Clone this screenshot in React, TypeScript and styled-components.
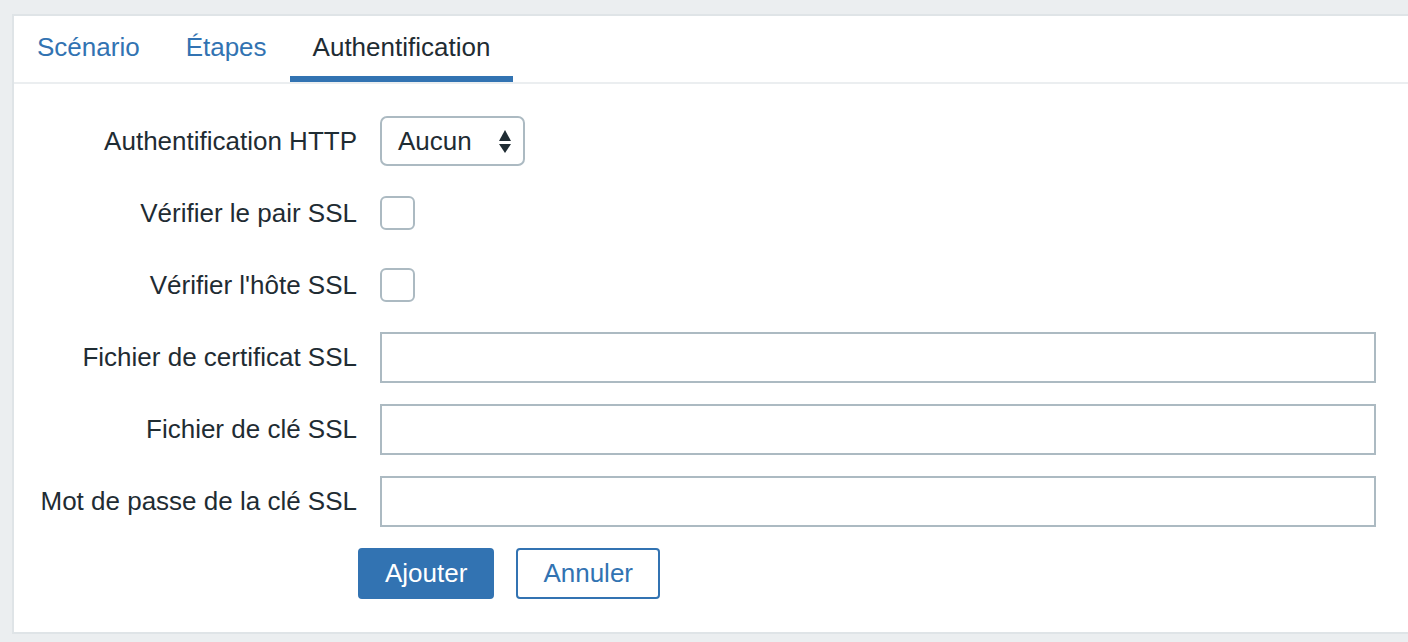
import React, { FC, useState } from 'react';
import styled, { createGlobalStyle } from 'styled-components';

const BLUE = '#3273b2';
const TEXT = '#1f2c33';
const FIELD_BORDER = '#acbac2';

const GlobalStyle = createGlobalStyle`
	html,
	body {
		margin: 0;
		background: #ebeef0;
		overflow: hidden;
	}
	body {
		font-family: 'Liberation Sans', Arial, Helvetica, sans-serif;
		color: ${TEXT};
	}
`;

const TABS = ['Scénario', 'Étapes', 'Authentification'];

type FieldKind = 'select' | 'checkbox' | 'text';

const FIELDS: { label: string; kind: FieldKind }[] = [
	{ label: 'Authentification HTTP', kind: 'select' },
	{ label: 'Vérifier le pair SSL', kind: 'checkbox' },
	{ label: "Vérifier l'hôte SSL", kind: 'checkbox' },
	{ label: 'Fichier de certificat SSL', kind: 'text' },
	{ label: 'Fichier de clé SSL', kind: 'text' },
	{ label: 'Mot de passe de la clé SSL', kind: 'text' },
];

const SortArrows: FC = () => (
	<svg width="12" height="23" viewBox="0 0 12 23" aria-hidden="true">
		<polygon points="0,11 6,0 12,11" fill={TEXT} />
		<polygon points="0,14 12,14 6,23" fill={TEXT} />
	</svg>
);

const App: FC = () => {
	const [activeTab, setActiveTab] = useState(2);

	const renderField = (kind: FieldKind) => {
		switch (kind) {
			case 'select':
				return (
					<Select>
						<span>Aucun</span>
						<SortArrows />
					</Select>
				);
			case 'checkbox':
				return <Checkbox />;
			default:
				return <TextInput />;
		}
	};

	return (
		<>
			<GlobalStyle />
			<Page>
				<Panel>
					<TabList>
						{TABS.map((tab, i) => (
							<Tab key={tab} active={i === activeTab} onClick={() => setActiveTab(i)}>
								{tab}
							</Tab>
						))}
					</TabList>
					<Form>
						{FIELDS.map((field) => (
							<Row key={field.label}>
								<Label>{field.label}</Label>
								{renderField(field.kind)}
							</Row>
						))}
						<ButtonRow>
							<PrimaryButton>Ajouter</PrimaryButton>
							<SecondaryButton>Annuler</SecondaryButton>
						</ButtonRow>
					</Form>
				</Panel>
			</Page>
		</>
	);
};

const Page = styled.div`
	padding: 14px 0 0 12px;
`;

const Panel = styled.div`
	width: 1420px;
	background: #fff;
	border: 2px solid #dfe4e7;
	border-right: none;
`;

const TabList = styled.div`
	display: flex;
	border-bottom: 2px solid #ebeef0;
`;

const Tab = styled.div<{ active: boolean }>`
	padding: 2px 23px 0;
	font-size: 26px;
	line-height: 58px;
	border-bottom: 6px solid ${(props) => (props.active ? BLUE : 'transparent')};
	color: ${(props) => (props.active ? TEXT : BLUE)};
	cursor: pointer;
`;

const Form = styled.div`
	padding: 21px 0 23px;
`;

const Row = styled.div`
	display: grid;
	grid-template-columns: 343px auto;
	column-gap: 23px;
	align-items: center;
	justify-items: start;
	height: 72px;
`;

const Label = styled.div`
	justify-self: end;
	font-size: 26px;
	white-space: nowrap;
`;

const Select = styled.div`
	box-sizing: border-box;
	display: flex;
	align-items: center;
	justify-content: space-between;
	width: 145px;
	height: 50px;
	padding: 0 12px 0 16px;
	border: 2px solid ${FIELD_BORDER};
	border-radius: 7px;
	font-size: 26px;
`;

const Checkbox = styled.div`
	box-sizing: border-box;
	width: 35px;
	height: 34px;
	border: 2px solid ${FIELD_BORDER};
	border-radius: 6px;
	background: #fff;
`;

const TextInput = styled.input`
	box-sizing: border-box;
	width: 996px;
	height: 51px;
	border: 2px solid ${FIELD_BORDER};
	border-radius: 0;
	outline: none;
	padding: 0 10px;
	font: inherit;
	font-size: 26px;
	color: ${TEXT};
`;

const ButtonRow = styled.div`
	display: flex;
	align-items: center;
	gap: 22px;
	height: 72px;
	padding-left: 344px;
`;

const Button = styled.button`
	box-sizing: border-box;
	height: 51px;
	padding: 0 25px;
	border: 2px solid ${BLUE};
	border-radius: 4px;
	font-family: inherit;
	font-size: 26px;
	cursor: pointer;
`;

const PrimaryButton = styled(Button)`
	background: ${BLUE};
	color: #fff;
`;

const SecondaryButton = styled(Button)`
	background: #fff;
	color: ${BLUE};
`;

export default App;
